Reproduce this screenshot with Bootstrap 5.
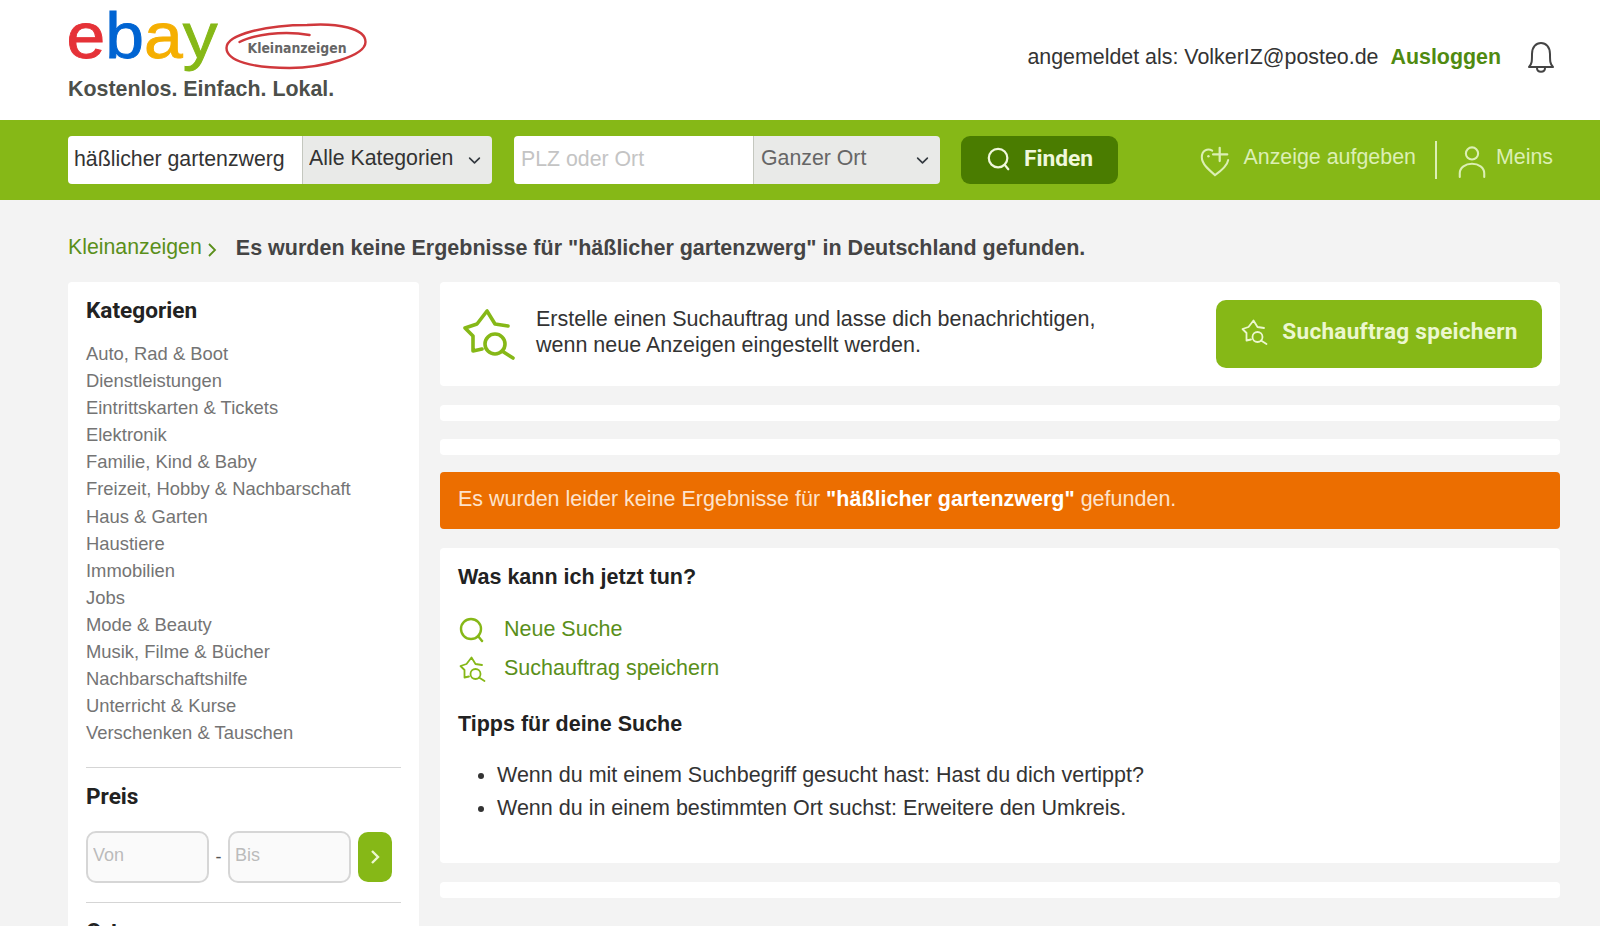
<!DOCTYPE html>
<html lang="de">
<head>
    <meta charset="UTF-8">
    <meta name="viewport" content="width=device-width, initial-scale=1.0">
    <title>Kleinanzeigen</title>
    <link href="https://cdn.jsdelivr.net/npm/bootstrap@5.3.0/dist/css/bootstrap.min.css" rel="stylesheet">
    <style>
        html, body {
            height: 100%;
            overflow: hidden;
        }
        body {
            background-color: #f3f3f3;
            color: #333;
            font-family: "Liberation Sans", Arial, sans-serif;
            font-size: 21px;
        }
        a {
            text-decoration: none;
        }
        .wrap {
            padding: 0 40px 0 68px;
        }
        .top-head {
            background-color: #fff;
            height: 120px;
        }
        .logo-box {
            width: 310px;
            height: 78px;
            margin-left: -3px;
        }
        .logo-box svg {
            display: block;
        }
        .tagline {
            color: #4c4f4a;
            font-weight: 700;
            font-size: 21.4px;
            line-height: 26px;
            margin-top: -2px;
        }
        .login-txt {
            color: #333;
            font-size: 21.4px;
            margin-bottom: 6px;
        }
        .logout-link {
            color: #4f8a10;
            font-weight: 700;
            margin-left: 12px;
            margin-right: 25px;
        }
        .bell-ico {
            width: 30px;
            height: 34px;
            margin-right: 4px;
        }
        .green-bar {
            background-color: #86b817;
            height: 80px;
        }
        .search-group {
            height: 48px;
        }
        .search-group .form-control,
        .search-group .form-select {
            font-size: 21.3px;
            height: 48px;
            border: 0;
            border-radius: 4px;
            color: #333;
            padding: 0 6px 2px;
            box-shadow: none;
        }
        .search-group .form-control::placeholder {
            color: #c4c4c4;
        }
        .search-group .form-select {
            background-color: #e9eae8;
            border-left: 1px solid #c4c7bf;
            padding-right: 30px;
            background-position: right 9px center;
            background-size: 17px 13px;
            flex: none;
        }
        .group-one {
            width: 425px;
        }
        .group-one .form-control {
            width: 235px;
            flex: none;
        }
        .group-one .form-select {
            width: 190px;
        }
        .group-two {
            width: 427px;
            margin-left: 21px;
        }
        .group-two .form-control {
            width: 240px;
            flex: none;
            padding-left: 7px;
        }
        .group-two .form-select {
            width: 187px;
            color: #666;
            padding-left: 7px;
        }
        .find-btn {
            background-color: #4a7c00;
            border: 0;
            border-radius: 9px;
            color: #f0f8dc;
            font-family: Roboto, sans-serif;
            font-weight: 700;
            font-size: 22.8px;
            width: 157px;
            height: 48px;
            margin-left: 20px;
            padding: 0 0 2px;
        }
        .find-btn:hover {
            background-color: #4a7c00;
            color: #f0f8dc;
        }
        .find-btn svg {
            width: 26px;
            height: 26px;
            margin-right: 12px;
        }
        .bar-box {
            margin-right: 7px;
        }
        .bar-link {
            color: #dcefb4;
            font-size: 21.4px;
            line-height: 24px;
            padding-bottom: 7px;
        }
        .bar-link svg {
            width: 32px;
            height: 38px;
            margin-top: 8px;
        }
        .bar-split {
            width: 2px;
            height: 38px;
            background-color: #dcefb4;
            margin: 0 19px 0 19px;
        }
        .crumb-row {
            height: 82px;
            padding-top: 14px;
        }
        .crumb-link {
            color: #5a8f1a;
            font-size: 21.3px;
        }
        .crumb-arrow {
            width: 10px;
            height: 16px;
            margin: 3px 19px 0 5px;
        }
        .crumb-title {
            font-weight: 700;
            font-size: 21.5px;
            color: #444;
        }
        .side-box {
            width: 351px;
            flex: none;
            padding: 14px 18px;
            height: 700px;
        }
        .main-col {
            width: 1120px;
            margin-left: 21px;
        }
        .panel-box {
            background-color: #fff;
            border: 0;
            border-radius: 4px;
        }
        .side-head {
            font-family: Roboto, sans-serif;
            font-weight: 700;
            font-size: 22.6px;
            color: #222;
            margin: 0;
            line-height: 30px;
        }
        .cat-list {
            margin: 14px 0 21px;
        }
        .cat-list a {
            color: #747474;
            font-size: 18.4px;
            line-height: 27.1px;
            display: block;
        }
        .side-line {
            margin: 0;
            border-color: #d5d5d5;
            opacity: 1;
        }
        .preis-head {
            margin-top: 14px;
        }
        .ort-head {
            margin-top: 14px;
        }
        .price-row {
            margin-top: 19px;
            margin-bottom: 19px;
        }
        .price-row .form-control {
            width: 123px;
            height: 52px;
            font-size: 18px;
            padding: 0 5px 3px;
            background-color: #fafafa;
            border: 2px solid #d6d6d6;
            border-radius: 10px;
        }
        .price-row .form-control::placeholder {
            color: #bbb;
        }
        .price-dash {
            width: 19px;
            text-align: center;
            color: #555;
            font-size: 18px;
        }
        .price-go {
            width: 34px;
            height: 50px;
            margin-left: 7px;
            background-color: #86b817;
            border: 0;
            border-radius: 10px;
            padding: 0;
        }
        .price-go svg {
            width: 12px;
            height: 16px;
        }
        .agent-box {
            height: 104px;
            padding: 0 18px 0 20px;
            margin-bottom: 19px;
        }
        .agent-ico {
            width: 56px;
            height: 56px;
            margin-right: 20px;
            color: #86b817;
        }
        .agent-txt {
            font-size: 21.5px;
            line-height: 26.5px;
            margin-top: -4px;
        }
        .agent-btn {
            background-color: #86b817;
            border: 0;
            border-radius: 10px;
            color: #ecf7cf;
            font-family: Roboto, sans-serif;
            font-weight: 700;
            font-size: 22.6px;
            letter-spacing: .25px;
            width: 326px;
            height: 68px;
            margin-top: -1px;
            padding: 0 0 3px;
        }
        .agent-btn:hover {
            background-color: #86b817;
            color: #ecf7cf;
        }
        .agent-btn svg {
            width: 28px;
            height: 28px;
            margin-right: 14px;
        }
        .empty-strip {
            height: 16px;
            margin-bottom: 17.5px;
        }
        .orange-box {
            background-color: #ec6e00;
            color: #fde3cc;
            border-radius: 4px;
            height: 57px;
            padding: 0 18px 3px;
            margin-bottom: 19px;
            font-size: 21.5px;
        }
        .orange-box strong {
            color: #fff;
        }
        .help-box {
            height: 315px;
            padding: 14px 18px;
            margin-bottom: 19px;
        }
        .help-head {
            font-weight: 700;
            font-size: 21.5px;
            line-height: 30px;
            color: #222;
            margin: 0;
        }
        .help-links {
            margin-top: 18px;
        }
        .help-link {
            color: #5a8f1a;
            font-size: 21.5px;
            line-height: 39px;
        }
        .help-link svg {
            width: 28px;
            height: 28px;
            margin-right: 18px;
            color: #86b817;
        }
        .tips-head {
            margin-top: 21px;
        }
        .help-list {
            padding-left: 39px;
            margin: 20px 0 0;
            font-size: 21.5px;
            line-height: 32.5px;
        }
    </style>
</head>
<body>

<svg width="0" height="0" class="d-none">
    <symbol id="ico-star" viewBox="0 0 56 56">
        <path d="M48 20 35 18 27 5 17 18 5 22 13 30 13 45 22 43" fill="none" stroke="currentColor" stroke-width="3.6" stroke-linecap="round" stroke-linejoin="round"/>
        <circle cx="35" cy="38" r="10" fill="none" stroke="currentColor" stroke-width="3.6"/>
        <path d="M42 45 53 52" fill="none" stroke="currentColor" stroke-width="3.6" stroke-linecap="round"/>
    </symbol>
    <symbol id="ico-search" viewBox="0 0 28 28">
        <circle cx="13" cy="13" r="10" fill="none" stroke="currentColor" stroke-width="2.4"/>
        <path d="M20 20 24 25" fill="none" stroke="currentColor" stroke-width="2.4" stroke-linecap="round"/>
    </symbol>
</svg>

<header class="top-head">
    <div class="wrap d-flex justify-content-between align-items-center h-100">
        <div class="align-self-start">
            <div class="logo-box">
                <svg width="310" height="78" viewBox="0 0 310 78">
                    <text x="1.6" y="58" font-family="'Liberation Sans', Arial, sans-serif" font-size="64" stroke-width=".9" textLength="151" lengthAdjust="spacingAndGlyphs"><tspan fill="#e53238" stroke="#e53238">e</tspan><tspan fill="#0064d2" stroke="#0064d2">b</tspan><tspan fill="#f5af02" stroke="#f5af02">a</tspan><tspan fill="#86b817" stroke="#86b817">y</tspan></text>
                    <g transform="translate(2.5 6)">
                        <path d="M240 19C270 17 298 22 298 36 298 50 255 62 222 62 185 62 159 55 159 42 159 28 200 19 240 19M172 36C185 29 215 24 242 29" fill="none" stroke="#d0383c" stroke-width="2.4" stroke-linecap="round"/>
                        <text x="180" y="47" font-family="'DejaVu Sans', sans-serif" font-weight="700" font-size="13.5" fill="#666" textLength="99" lengthAdjust="spacingAndGlyphs">Kleinanzeigen</text>
                    </g>
                </svg>
            </div>
            <div class="tagline">Kostenlos. Einfach. Lokal.</div>
        </div>
        <div class="d-flex align-items-center login-txt">
            <span>angemeldet als: VolkerIZ@posteo.de</span>
            <a class="logout-link" href="#">Ausloggen</a>
            <svg class="bell-ico" viewBox="0 0 30 34">
                <path d="M3 27C6 24 6 21 6 14 6 7 10 3 15 3S24 7 24 14C24 21 24 24 27 27Z" fill="none" stroke="#444" stroke-width="2" stroke-linejoin="round"/>
                <path d="M11 28C11 33 19 33 19 28" fill="none" stroke="#444" stroke-width="2"/>
            </svg>
        </div>
    </div>
</header>

<nav class="green-bar">
    <div class="wrap d-flex align-items-center h-100">
        <div class="input-group search-group group-one flex-nowrap">
            <input type="text" class="form-control" value="häßlicher gartenzwerg" aria-label="Suche">
            <select class="form-select" aria-label="Kategorie"><option>Alle Kategorien</option></select>
        </div>
        <div class="input-group search-group group-two flex-nowrap">
            <input type="text" class="form-control" placeholder="PLZ oder Ort" aria-label="Ort">
            <select class="form-select" aria-label="Umkreis"><option>Ganzer Ort</option></select>
        </div>
        <button class="btn find-btn d-flex align-items-center justify-content-center" type="button">
            <svg><use href="#ico-search"/></svg>Finden
        </button>
        <div class="d-flex align-items-center ms-auto bar-box">
            <a class="bar-link d-flex align-items-center" href="#">
                <svg class="me-2" viewBox="0 0 34 38">
                    <path d="M14 8C9 5 3 8 3 15 3 22 10 28 17 34 24 29 30 24 31 18" fill="none" stroke="currentColor" stroke-width="2.2" stroke-linecap="round"/>
                    <path d="M22 5V19M15 12H30" fill="none" stroke="currentColor" stroke-width="2.4" stroke-linecap="round"/>
                    <circle cx="10" cy="14" r="1.3" fill="currentColor"/>
                </svg>
                <span class="ms-1">Anzeige aufgeben</span>
            </a>
            <div class="bar-split"></div>
            <a class="bar-link d-flex align-items-center" href="#">
                <svg class="me-2" viewBox="0 0 34 38">
                    <circle cx="17" cy="11" r="6.5" fill="none" stroke="currentColor" stroke-width="2.2"/>
                    <path d="M4 36V32C4 26 10 22 17 22S30 26 30 32V36" fill="none" stroke="currentColor" stroke-width="2.2" stroke-linecap="round"/>
                </svg>
                <span>Meins</span>
            </a>
        </div>
    </div>
</nav>

<div class="wrap">
    <div class="crumb-row d-flex align-items-center">
        <a class="crumb-link" href="#">Kleinanzeigen</a>
        <svg class="crumb-arrow" viewBox="0 0 10 16"><path d="M2 2 8 8 2 14" fill="none" stroke="#5a8f1a" stroke-width="1.8"/></svg>
        <span class="crumb-title">Es wurden keine Ergebnisse für "häßlicher gartenzwerg" in Deutschland gefunden.</span>
    </div>

    <div class="d-flex align-items-start">
        <aside class="panel-box side-box">
            <h2 class="side-head">Kategorien</h2>
            <div class="cat-list">
                <a href="#">Auto, Rad &amp; Boot</a>
                <a href="#">Dienstleistungen</a>
                <a href="#">Eintrittskarten &amp; Tickets</a>
                <a href="#">Elektronik</a>
                <a href="#">Familie, Kind &amp; Baby</a>
                <a href="#">Freizeit, Hobby &amp; Nachbarschaft</a>
                <a href="#">Haus &amp; Garten</a>
                <a href="#">Haustiere</a>
                <a href="#">Immobilien</a>
                <a href="#">Jobs</a>
                <a href="#">Mode &amp; Beauty</a>
                <a href="#">Musik, Filme &amp; Bücher</a>
                <a href="#">Nachbarschaftshilfe</a>
                <a href="#">Unterricht &amp; Kurse</a>
                <a href="#">Verschenken &amp; Tauschen</a>
            </div>
            <hr class="side-line">
            <h2 class="side-head preis-head">Preis</h2>
            <div class="d-flex align-items-center price-row">
                <input type="text" class="form-control" placeholder="Von" aria-label="Von">
                <span class="price-dash">-</span>
                <input type="text" class="form-control" placeholder="Bis" aria-label="Bis">
                <button class="btn price-go d-flex align-items-center justify-content-center" type="button" aria-label="Los">
                    <svg viewBox="0 0 12 16"><path d="M3 2 9 8 3 14" fill="none" stroke="#ecf7cf" stroke-width="2.4"/></svg>
                </button>
            </div>
            <hr class="side-line">
            <h2 class="side-head ort-head">Ort</h2>
        </aside>

        <main class="main-col">
            <div class="panel-box agent-box d-flex align-items-center">
                <svg class="agent-ico"><use href="#ico-star"/></svg>
                <div class="agent-txt">Erstelle einen Suchauftrag und lasse dich benachrichtigen,<br>wenn neue Anzeigen eingestellt werden.</div>
                <button class="btn agent-btn ms-auto d-flex align-items-center justify-content-center" type="button">
                    <svg><use href="#ico-star"/></svg>Suchauftrag speichern
                </button>
            </div>
            <div class="panel-box empty-strip"></div>
            <div class="panel-box empty-strip"></div>
            <div class="orange-box d-flex align-items-center">
                <span>Es wurden leider keine Ergebnisse für <strong>"häßlicher gartenzwerg"</strong> gefunden.</span>
            </div>
            <div class="panel-box help-box">
                <h3 class="help-head">Was kann ich jetzt tun?</h3>
                <div class="help-links">
                    <a class="help-link d-flex align-items-center" href="#">
                        <svg><use href="#ico-search"/></svg>Neue Suche
                    </a>
                    <a class="help-link d-flex align-items-center" href="#">
                        <svg><use href="#ico-star"/></svg>Suchauftrag speichern
                    </a>
                </div>
                <h3 class="help-head tips-head">Tipps für deine Suche</h3>
                <ul class="help-list">
                    <li>Wenn du mit einem Suchbegriff gesucht hast: Hast du dich vertippt?</li>
                    <li>Wenn du in einem bestimmten Ort suchst: Erweitere den Umkreis.</li>
                </ul>
            </div>
            <div class="panel-box empty-strip"></div>
        </main>
    </div>
</div>

<script src="https://cdn.jsdelivr.net/npm/bootstrap@5.3.0/dist/js/bootstrap.bundle.min.js"></script>
</body>
</html>
